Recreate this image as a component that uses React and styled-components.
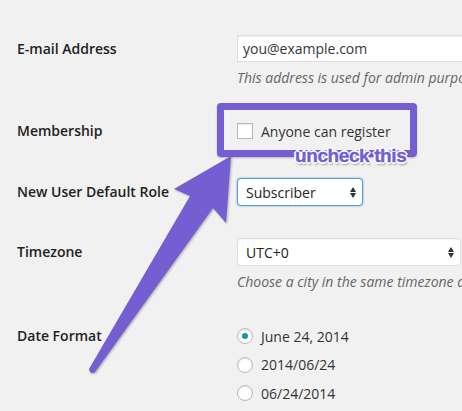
import React from "react";
import styled, { createGlobalStyle } from "styled-components";

const Global = createGlobalStyle`
  html, body { margin: 0; padding: 0; background: #f1f1f1; overflow: hidden; }
  body { font-family: "Open Sans", "Liberation Sans", sans-serif; }
`;

const Page = styled.div`
  position: relative;
  width: 462px;
  height: 411px;
  overflow: hidden;
  background: #f1f1f1;
`;

const Form = styled.div`
  padding: 35px 0 0 17px;
`;

const Row = styled.div`
  display: grid;
  grid-template-columns: 220px max-content;
  margin-top: ${(p) => p.$gap}px;
`;

const Label = styled.div`
  font-size: 14px;
  font-weight: 600;
  color: #222;
  line-height: ${(p) => p.$lh}px;
  white-space: nowrap;
`;

const Field = styled.div`
  display: flex;
  flex-direction: column;
  align-items: flex-start;
`;

const TextInput = styled.div`
  box-sizing: border-box;
  width: 350px;
  height: 27px;
  padding: 0 5px;
  background: #fff;
  border: 1px solid #ddd;
  box-shadow: inset 0 1px 2px rgba(0, 0, 0, 0.07);
  font-size: 14px;
  line-height: 25px;
  color: #32373c;
  white-space: nowrap;
`;

const Description = styled.p`
  margin: 6px 0 0;
  font-size: 14px;
  font-style: italic;
  line-height: 20px;
  color: #666;
  white-space: nowrap;
`;

const CheckRow = styled.div`
  display: flex;
  align-items: center;
  gap: 8px;
  height: 24px;
  font-size: 14px;
  color: #333;
  white-space: nowrap;
`;

const Checkbox = styled.span`
  box-sizing: border-box;
  width: 16px;
  height: 16px;
  background: #fff;
  border: 1px solid #b4b9be;
  box-shadow: inset 0 1px 2px rgba(0, 0, 0, 0.1);
`;

const Select = styled.div`
  box-sizing: border-box;
  display: flex;
  align-items: center;
  justify-content: space-between;
  width: ${(p) => p.$w}px;
  height: 28px;
  padding: 0 ${(p) => p.$pr}px 0 8px;
  background: #fff;
  border: 1px solid ${(p) => (p.$focus ? "#5b9dd9" : "#ddd")};
  border-radius: 4px;
  box-shadow: ${(p) =>
    p.$focus ? "0 0 2px rgba(30, 140, 190, 0.8)" : "inset 0 1px 2px rgba(0,0,0,0.05)"};
  font-size: 14px;
  color: #222;
  white-space: nowrap;
`;

const RadioList = styled.div`
  display: flex;
  flex-direction: column;
`;

const RadioItem = styled.div`
  display: flex;
  align-items: center;
  gap: 8px;
  height: 28.5px;
  font-size: 14px;
  color: #333;
  white-space: nowrap;
`;

const Radio = styled.span`
  box-sizing: border-box;
  display: flex;
  align-items: center;
  justify-content: center;
  width: 16px;
  height: 16px;
  border-radius: 50%;
  background: #fff;
  border: 1px solid #b4b9be;
  box-shadow: inset 0 1px 2px rgba(0, 0, 0, 0.1);
  &::after {
    content: "";
    display: ${(p) => (p.$checked ? "block" : "none")};
    width: 6px;
    height: 6px;
    border-radius: 50%;
    background: #1e8cbe;
  }
`;

const Callout = styled.div`
  position: absolute;
  left: 217px;
  top: 103px;
  width: 200px;
  height: 54px;
  box-sizing: border-box;
  border: 7px solid #745ed2;
  border-radius: 4px;
  box-shadow: 0 1px 2px rgba(0, 0, 0, 0.25);
`;

const ArrowSvg = styled.svg`
  position: absolute;
  left: 0;
  top: 0;
  filter: drop-shadow(1px 1px 1px rgba(0, 0, 0, 0.3));
`;

const Note = styled.div`
  position: absolute;
  left: 295px;
  top: 145px;
  font-family: "Liberation Sans", Arial, sans-serif;
  font-weight: 700;
  font-size: 19px;
  line-height: 22px;
  letter-spacing: -0.4px;
  color: #745ed2;
  -webkit-text-stroke: 0.4px #745ed2;
  white-space: nowrap;
  text-shadow: 1px 0 0 #fff, -1px 0 0 #fff, 0 1px 0 #fff, 0 -1px 0 #fff,
    1px 1px 0 #fff, -1px -1px 0 #fff, 1px -1px 0 #fff, -1px 1px 0 #fff,
    2px 0 0 #fff, -2px 0 0 #fff, 0 2px 0 #fff, 0 -2px 0 #fff,
    1px 3px 2px rgba(0, 0, 0, 0.35);
`;

const Arrows = () => (
  <svg width="6" height="11" viewBox="0 0 6 11">
    <polygon points="0,5 3,0 6,5" fill="#333" />
    <polygon points="0,6 3,11 6,6" fill="#333" />
  </svg>
);

export default function App() {
  return (
    <Page>
      <Global />
      <Form>
        <Row $gap={0}>
          <Label $lh={27}>E-mail Address</Label>
          <Field>
            <TextInput>you@example.com</TextInput>
            <Description>
              This address is used for admin purposes, like new user notification.
            </Description>
          </Field>
        </Row>
        <Row $gap={31}>
          <Label $lh={24}>Membership</Label>
          <Field>
            <CheckRow>
              <Checkbox />
              Anyone can register
            </CheckRow>
          </Field>
        </Row>
        <Row $gap={35}>
          <Label $lh={28}>New User Default Role</Label>
          <Field>
            <Select $w={126} $pr={6} $focus>
              Subscriber
              <Arrows />
            </Select>
          </Field>
        </Row>
        <Row $gap={32}>
          <Label $lh={28}>Timezone</Label>
          <Field>
            <Select $w={224} $pr={6}>
              UTC+0
              <Arrows />
            </Select>
            <Description>
              Choose a city in the same timezone as you.
            </Description>
          </Field>
        </Row>
        <Row $gap={30}>
          <Label $lh={28}>Date Format</Label>
          <RadioList>
            <RadioItem>
              <Radio $checked />
              June 24, 2014
            </RadioItem>
            <RadioItem>
              <Radio />
              2014/06/24
            </RadioItem>
            <RadioItem>
              <Radio />
              06/24/2014
            </RadioItem>
          </RadioList>
        </Row>
      </Form>
      <Callout />
      <ArrowSvg width="462" height="411" viewBox="0 0 462 411">
        <path
          d="M231 156 L174 189 L190 196 L89 369 Q90 375 95 372 L213 208 L226 223 Z"
          fill="#745ed2"
          strokeLinejoin="round"
        />
      </ArrowSvg>
      <Note>uncheck this</Note>
    </Page>
  );
}
